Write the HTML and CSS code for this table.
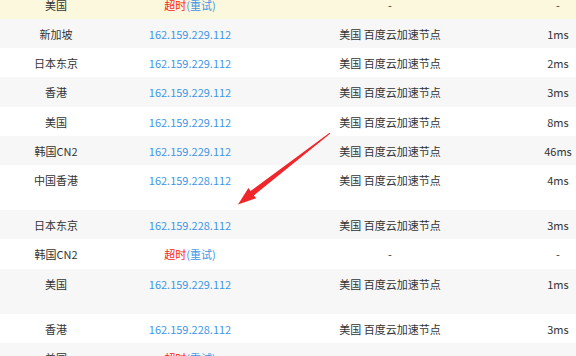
FILE: index.html
```html
<!DOCTYPE html>
<html lang="zh-CN">
<head>
<meta charset="utf-8">
<title>测速结果</title>
<link rel="stylesheet" href="styles.css">
</head>
<body>
<div class="viewport">
  <div class="table">
    <div class="row hl"><div class="cell">美国</div><div class="cell"><span class="err">超时</span><span class="retry">(重试)</span></div><div class="cell">-</div><div class="cell">-</div></div>
    <div class="row odd"><div class="cell">新加坡</div><div class="cell ip">162.159.229.112</div><div class="cell">美国 百度云加速节点</div><div class="cell">1ms</div></div>
    <div class="row"><div class="cell">日本东京</div><div class="cell ip">162.159.229.112</div><div class="cell">美国 百度云加速节点</div><div class="cell">2ms</div></div>
    <div class="row odd"><div class="cell">香港</div><div class="cell ip">162.159.229.112</div><div class="cell">美国 百度云加速节点</div><div class="cell">3ms</div></div>
    <div class="row"><div class="cell">美国</div><div class="cell ip">162.159.229.112</div><div class="cell">美国 百度云加速节点</div><div class="cell">8ms</div></div>
    <div class="row odd"><div class="cell">韩国CN2</div><div class="cell ip">162.159.229.112</div><div class="cell">美国 百度云加速节点</div><div class="cell">46ms</div></div>
    <div class="row tall"><div class="cell">中国香港</div><div class="cell ip">162.159.228.112</div><div class="cell">美国 百度云加速节点</div><div class="cell">4ms</div></div>
    <div class="row odd"><div class="cell">日本东京</div><div class="cell ip">162.159.228.112</div><div class="cell">美国 百度云加速节点</div><div class="cell">3ms</div></div>
    <div class="row"><div class="cell">韩国CN2</div><div class="cell"><span class="err">超时</span><span class="retry">(重试)</span></div><div class="cell">-</div><div class="cell">-</div></div>
    <div class="row odd tall"><div class="cell">美国</div><div class="cell ip">162.159.229.112</div><div class="cell">美国 百度云加速节点</div><div class="cell">1ms</div></div>
    <div class="row"><div class="cell">香港</div><div class="cell ip">162.159.228.112</div><div class="cell">美国 百度云加速节点</div><div class="cell">3ms</div></div>
    <div class="row odd"><div class="cell">美国</div><div class="cell"><span class="err">超时</span><span class="retry">(重试)</span></div><div class="cell">-</div><div class="cell">-</div></div>
  </div>
  <svg class="arrow" width="576" height="356" viewBox="0 0 576 356">
    <polygon points="330.4,133.6 253.9,195.4 256.2,198.2 238,204.5 248.4,188.1 250.6,190.9 329.6,132.8" fill="#f0262a"/>
  </svg>
</div>
</body>
</html>
```
FILE: styles.css
```css
html, body {
  margin: 0;
  padding: 0;
  background: #ffffff;
}
.viewport {
  position: relative;
  width: 576px;
  height: 356px;
  overflow: hidden;
}
.table {
  width: 604px;
  margin-top: -10.2px;
  font-family: "Noto Sans CJK SC", "Noto Sans", sans-serif;
  font-size: 11px;
  color: #333333;
}
.row {
  display: grid;
  grid-template-columns: 112px 156px 244px 92px;
  height: 29.2px;
  align-items: start;
  background: #ffffff;
}
.row.odd {
  background: #f7f7f7;
}
.row.hl {
  background: #fcf8dd;
}
.row.tall {
  height: 45.2px;
}
.cell {
  text-align: center;
  line-height: 16px;
  padding-top: 7px;
  white-space: nowrap;
}
.ip, .retry {
  color: #3e96e8;
}
.err {
  color: #ff2020;
}
.arrow {
  position: absolute;
  left: 0;
  top: 0;
  pointer-events: none;
}
```
